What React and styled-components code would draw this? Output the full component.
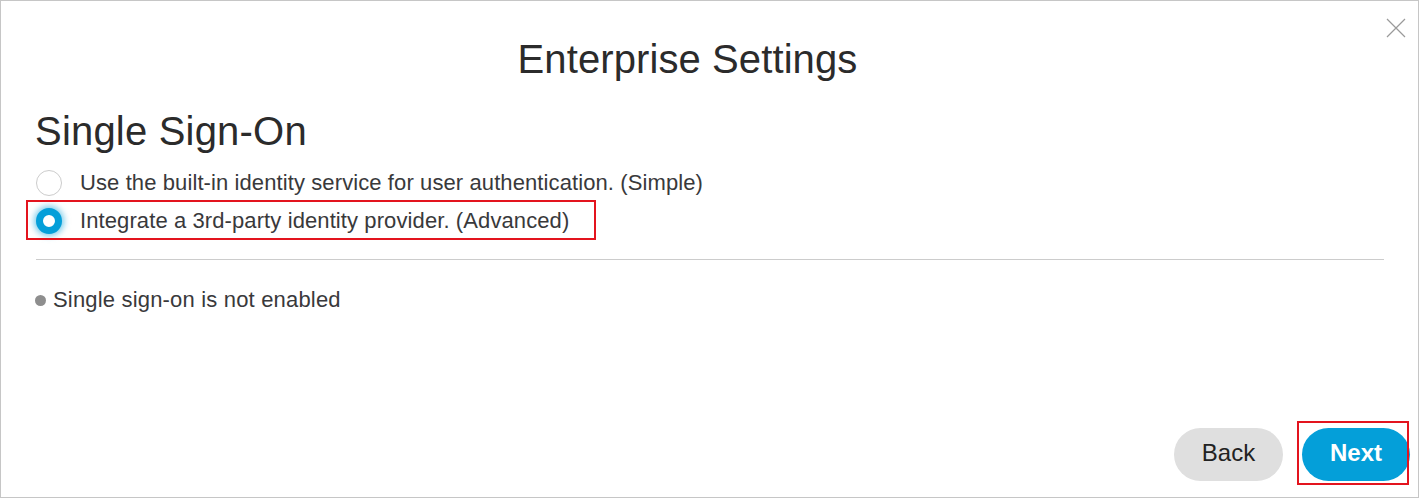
import styled, { createGlobalStyle } from 'styled-components';

const Global = createGlobalStyle`
    html, body {
        margin: 0;
        padding: 0;
        background: #ffffff;
    }
    body {
        font-family: "Liberation Sans", Arial, sans-serif;
        color: #39393b;
    }
`;

const Modal = styled.div`
    box-sizing: border-box;
    width: 1419px;
    height: 498px;
    border: 1px solid #c6c6c6;
    display: flex;
    flex-direction: column;
    background: #ffffff;
`;

const Header = styled.div`
    display: flex;
    align-items: flex-start;
`;

const Titulo = styled.h1`
    flex: 1;
    margin: 34px 0 0;
    text-align: center;
    font-size: 40px;
    letter-spacing: 0.1px;
    line-height: 48px;
    font-weight: normal;
    color: #2b2b2b;
`;

const Fechar = styled.button`
    width: 44px;
    height: 20px;
    margin-top: 17px;
    padding: 0;
    border: none;
    background: transparent;
    display: flex;
    justify-content: center;
    cursor: pointer;
`;

const Corpo = styled.div`
    padding: 0 34px 0 35px;
    display: flex;
    flex-direction: column;
`;

const Secao = styled.h2`
    margin: 24px 0 9px -1px;
    font-size: 40px;
    letter-spacing: 0.2px;
    line-height: 48px;
    font-weight: normal;
    color: #2b2b2b;
`;

const Opcao = styled.label`
    position: relative;
    display: flex;
    align-items: center;
    height: 38px;
    gap: 18px;
    font-size: 22px;
    letter-spacing: 0.1px;
    color: #39393b;
    cursor: pointer;

    ${(p) => p.$destaque && `
        &::after {
            content: '';
            position: absolute;
            left: -10px;
            top: -2px;
            width: 570px;
            height: 40px;
            box-sizing: border-box;
            border: 2px solid #e3141e;
            pointer-events: none;
        }
    `}
`;

const Radio = styled.span`
    box-sizing: border-box;
    width: 26px;
    height: 26px;
    border-radius: 50%;
    flex-shrink: 0;
    border: ${(p) => (p.$ativo ? '7px solid #049fd9' : '1px solid #cccccc')};
    background: #ffffff;
    box-shadow: ${(p) => (p.$ativo ? '0 0 6px 2px rgba(4, 159, 217, 0.55)' : 'none')};
`;

const Linha = styled.hr`
    margin: 19px 0 0;
    border: none;
    border-top: 1px solid #cccccc;
`;

const Status = styled.div`
    margin-top: 28px;
    display: flex;
    align-items: center;
    gap: 7px;
    font-size: 22px;
    letter-spacing: 0.18px;
    line-height: 24px;
    color: #39393b;
`;

const Ponto = styled.span`
    width: 11px;
    height: 11px;
    margin-left: -1px;
    border-radius: 50%;
    background: #8e8e8e;
`;

const Rodape = styled.div`
    margin-top: auto;
    display: flex;
    justify-content: flex-end;
    gap: 19px;
    padding: 0 8px 16px 0;
`;

const Botao = styled.button`
    position: relative;
    height: 53px;
    width: ${(p) => (p.$primario ? '108px' : '109px')};
    padding: 0 0 3px;
    border: none;
    border-radius: 27px;
    font-family: "Liberation Sans", Arial, sans-serif;
    font-size: 24px;
    font-weight: ${(p) => (p.$primario ? 'bold' : 'normal')};
    background: ${(p) => (p.$primario ? '#049fd9' : '#dfdfdf')};
    color: ${(p) => (p.$primario ? '#ffffff' : '#222222')};
    cursor: pointer;

    ${(p) => p.$destaque && `
        &::after {
            content: '';
            position: absolute;
            left: -5px;
            top: -7px;
            width: 112px;
            height: 64px;
            box-sizing: border-box;
            border: 2px solid #e3141e;
            pointer-events: none;
        }
    `}
`;

function App() {
    return (
        <>
            <Global />
            <Modal>
                <Header>
                    <Titulo>Enterprise Settings</Titulo>
                    <Fechar aria-label="Fechar">
                        <svg width="20" height="20" viewBox="0 0 20 20">
                            <path d="M1 1 L19 19 M19 1 L1 19" stroke="#9a9a9a" strokeWidth="1.2" fill="none" />
                        </svg>
                    </Fechar>
                </Header>
                <Corpo>
                    <Secao>Single Sign-On</Secao>
                    <Opcao>
                        <Radio />
                        Use the built-in identity service for user authentication. (Simple)
                    </Opcao>
                    <Opcao $destaque>
                        <Radio $ativo />
                        Integrate a 3rd-party identity provider. (Advanced)
                    </Opcao>
                    <Linha />
                    <Status>
                        <Ponto />
                        Single sign-on is not enabled
                    </Status>
                </Corpo>
                <Rodape>
                    <Botao>Back</Botao>
                    <Botao $primario $destaque>Next</Botao>
                </Rodape>
            </Modal>
        </>
    );
}

export default App;
